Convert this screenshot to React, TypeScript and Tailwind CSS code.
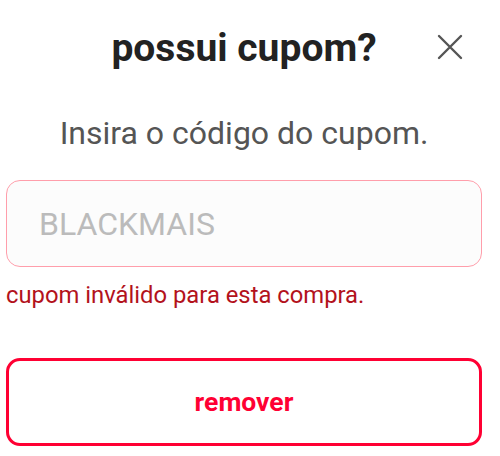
import React from "react";

export default function App() {
  return (
    <div
      className="w-[500px] h-[456px] bg-white overflow-hidden"
      style={{ fontFamily: "Roboto, 'Liberation Sans', sans-serif" }}
    >
      <div className="ml-[6px] w-[476px] flex flex-col">
        <div className="relative mt-[28px] h-[40px] flex items-center justify-center">
          <h1 className="text-[39px] leading-[40px] font-bold text-[#222222]">
            possui cupom?
          </h1>
          <button
            aria-label="fechar"
            className="absolute right-[18px] top-[5px] w-[28px] h-[28px] flex items-center justify-center"
          >
            <svg width="26" height="26" viewBox="0 0 26 26" fill="none">
              <path d="M2 2L24 24M24 2L2 24" stroke="#555555" strokeWidth="2.4" strokeLinecap="round" />
            </svg>
          </button>
        </div>
        <p className="mt-[47px] text-center text-[32px] leading-[36px] text-[#555555]">
          Insira o código do cupom.
        </p>
        <input
          placeholder="BLACKMAIS"
          className="mt-[29px] w-[476px] h-[87px] rounded-[14px] border-[1.5px] border-[#ff9eab] bg-[#fcfcfc] pl-[32px] text-[32px] text-[#333] placeholder:text-[#bbbbbb] outline-none"
        />
        <p className="mt-[14px] text-[23.8px] leading-[28px] text-[#b3121c]">
          cupom inválido para esta compra.
        </p>
        <button className="mt-[49px] w-[476px] h-[88px] rounded-[14px] border-[3px] border-[#ff0033] bg-white text-[26.5px] font-bold text-[#ff0033]">
          remover
        </button>
      </div>
    </div>
  );
}
